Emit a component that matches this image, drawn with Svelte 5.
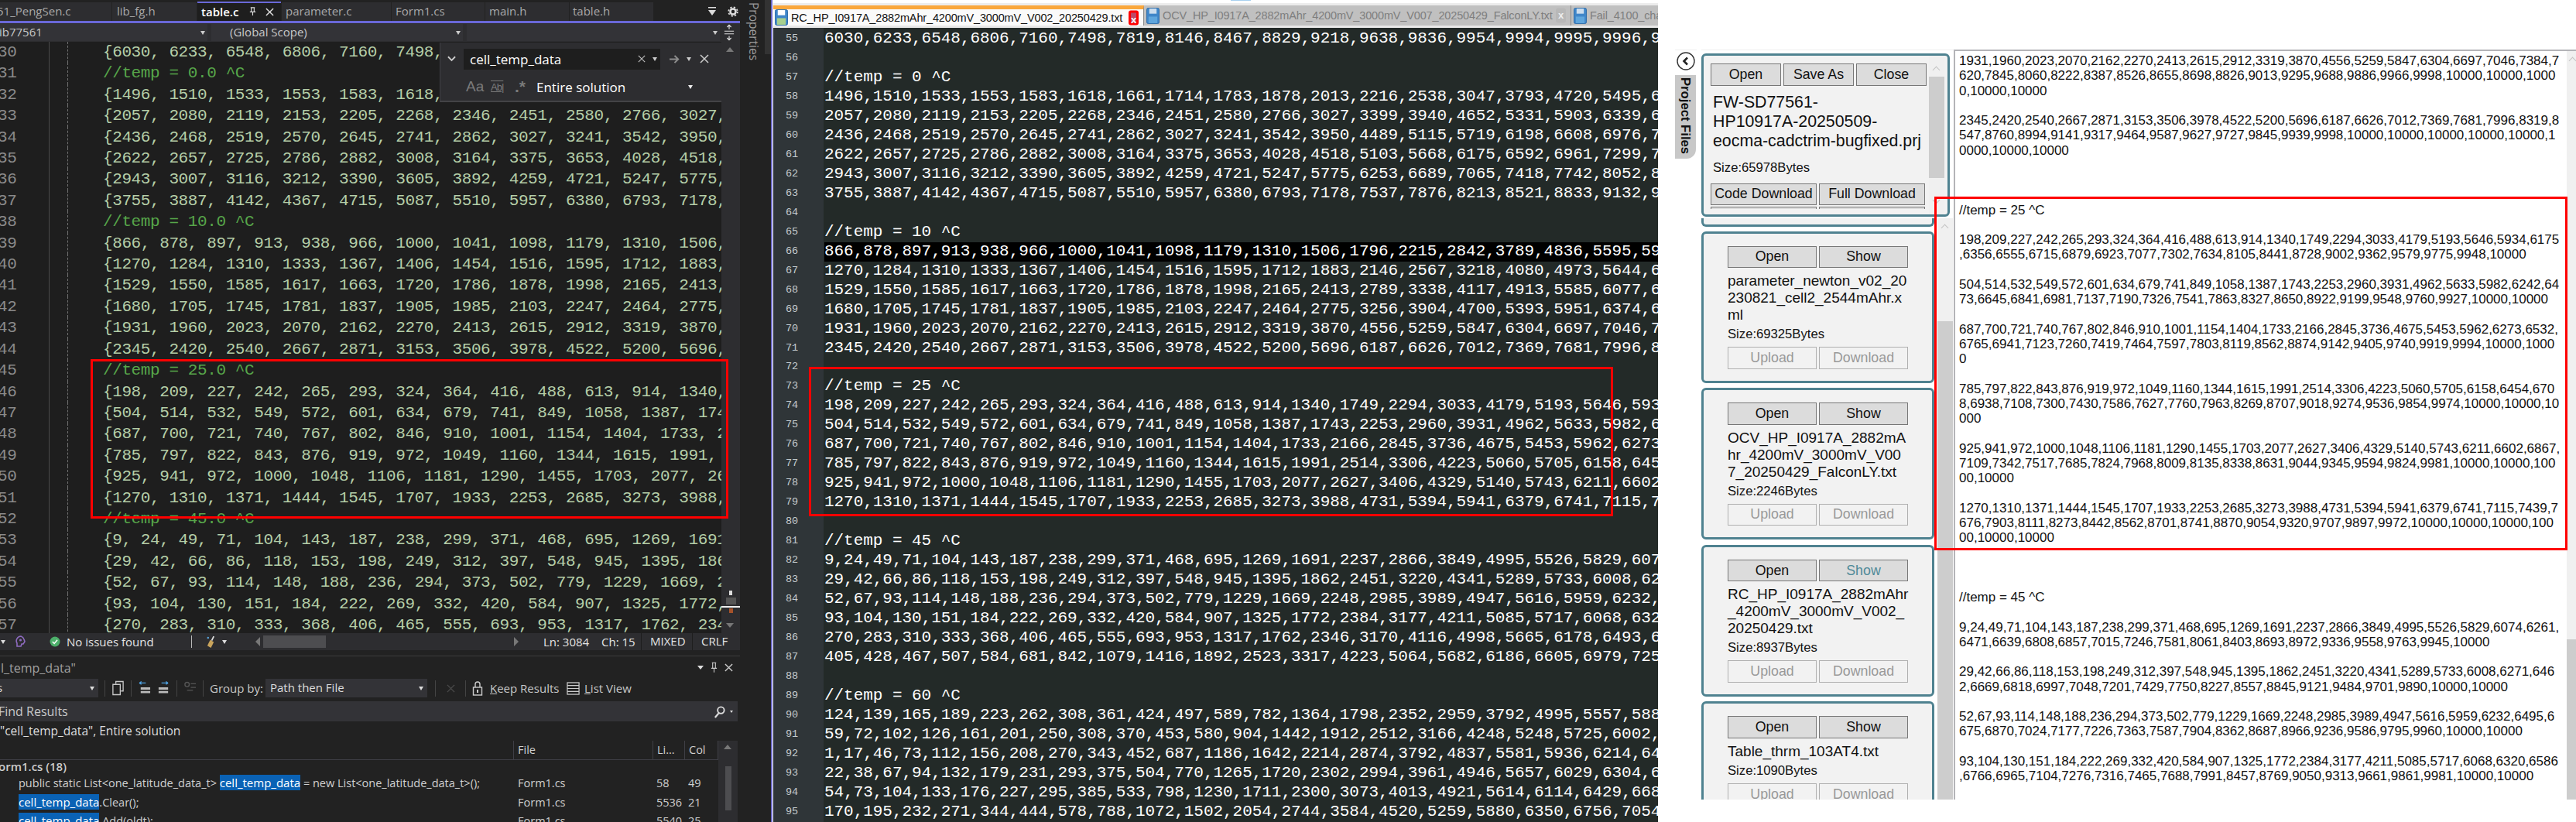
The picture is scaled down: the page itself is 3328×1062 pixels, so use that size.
<script>
  const vsTabs = [
    { label: '51_PengSen.c', w: 144, indent: -4 },
    { label: 'lib_fg.h', w: 109, indent: 6 },
    { label: 'table.c', w: 108, indent: 5, active: true },
    { label: 'parameter.c', w: 141, indent: 5 },
    { label: 'Form1.cs', w: 120, indent: 5 },
    { label: 'main.h', w: 108, indent: 5 },
    { label: 'table.h', w: 108, indent: 4 }
  ];

  const vsLines = [
    '{6030, 6233, 6548, 6806, 7160, 7498, 7819, 8146, 8467, 8829, 9218,',
    '//temp = 0.0 ^C',
    '{1496, 1510, 1533, 1553, 1583, 1618, 1661, 1714, 1783, 1878, 2013,',
    '{2057, 2080, 2119, 2153, 2205, 2268, 2346, 2451, 2580, 2766, 3027,',
    '{2436, 2468, 2519, 2570, 2645, 2741, 2862, 3027, 3241, 3542, 3950,',
    '{2622, 2657, 2725, 2786, 2882, 3008, 3164, 3375, 3653, 4028, 4518,',
    '{2943, 3007, 3116, 3212, 3390, 3605, 3892, 4259, 4721, 5247, 5775,',
    '{3755, 3887, 4142, 4367, 4715, 5087, 5510, 5957, 6380, 6793, 7178,',
    '//temp = 10.0 ^C',
    '{866, 878, 897, 913, 938, 966, 1000, 1041, 1098, 1179, 1310, 1506,',
    '{1270, 1284, 1310, 1333, 1367, 1406, 1454, 1516, 1595, 1712, 1883,',
    '{1529, 1550, 1585, 1617, 1663, 1720, 1786, 1878, 1998, 2165, 2413,',
    '{1680, 1705, 1745, 1781, 1837, 1905, 1985, 2103, 2247, 2464, 2775,',
    '{1931, 1960, 2023, 2070, 2162, 2270, 2413, 2615, 2912, 3319, 3870,',
    '{2345, 2420, 2540, 2667, 2871, 3153, 3506, 3978, 4522, 5200, 5696,',
    '//temp = 25.0 ^C',
    '{198, 209, 227, 242, 265, 293, 324, 364, 416, 488, 613, 914, 1340,',
    '{504, 514, 532, 549, 572, 601, 634, 679, 741, 849, 1058, 1387, 1743,',
    '{687, 700, 721, 740, 767, 802, 846, 910, 1001, 1154, 1404, 1733, 2166,',
    '{785, 797, 822, 843, 876, 919, 972, 1049, 1160, 1344, 1615, 1991, 2514,',
    '{925, 941, 972, 1000, 1048, 1106, 1181, 1290, 1455, 1703, 2077, 2627,',
    '{1270, 1310, 1371, 1444, 1545, 1707, 1933, 2253, 2685, 3273, 3988,',
    '//temp = 45.0 ^C',
    '{9, 24, 49, 71, 104, 143, 187, 238, 299, 371, 468, 695, 1269, 1691, 2237,',
    '{29, 42, 66, 86, 118, 153, 198, 249, 312, 397, 548, 945, 1395, 1862,',
    '{52, 67, 93, 114, 148, 188, 236, 294, 373, 502, 779, 1229, 1669, 2248,',
    '{93, 104, 130, 151, 184, 222, 269, 332, 420, 584, 907, 1325, 1772, 2384,',
    '{270, 283, 310, 333, 368, 406, 465, 555, 693, 953, 1317, 1762, 2346,'
  ];

  const nppLines = [
    '6030,6233,6548,6806,7160,7498,7819,8146,8467,8829,9218,9638,9836,9954,9994,9995,9996,9',
    '',
    '//temp = 0 ^C',
    '1496,1510,1533,1553,1583,1618,1661,1714,1783,1878,2013,2216,2538,3047,3793,4720,5495,6',
    '2057,2080,2119,2153,2205,2268,2346,2451,2580,2766,3027,3399,3940,4652,5331,5903,6339,6',
    '2436,2468,2519,2570,2645,2741,2862,3027,3241,3542,3950,4489,5115,5719,6198,6608,6976,7',
    '2622,2657,2725,2786,2882,3008,3164,3375,3653,4028,4518,5103,5668,6175,6592,6961,7299,7',
    '2943,3007,3116,3212,3390,3605,3892,4259,4721,5247,5775,6253,6689,7065,7418,7742,8052,8',
    '3755,3887,4142,4367,4715,5087,5510,5957,6380,6793,7178,7537,7876,8213,8521,8833,9132,9',
    '',
    '//temp = 10 ^C',
    '866,878,897,913,938,966,1000,1041,1098,1179,1310,1506,1796,2215,2842,3789,4836,5595,59',
    '1270,1284,1310,1333,1367,1406,1454,1516,1595,1712,1883,2146,2567,3218,4080,4973,5644,6',
    '1529,1550,1585,1617,1663,1720,1786,1878,1998,2165,2413,2789,3338,4117,4913,5585,6077,6',
    '1680,1705,1745,1781,1837,1905,1985,2103,2247,2464,2775,3256,3904,4700,5393,5951,6374,6',
    '1931,1960,2023,2070,2162,2270,2413,2615,2912,3319,3870,4556,5259,5847,6304,6697,7046,7',
    '2345,2420,2540,2667,2871,3153,3506,3978,4522,5200,5696,6187,6626,7012,7369,7681,7996,8',
    '',
    '//temp = 25 ^C',
    '198,209,227,242,265,293,324,364,416,488,613,914,1340,1749,2294,3033,4179,5193,5646,593',
    '504,514,532,549,572,601,634,679,741,849,1058,1387,1743,2253,2960,3931,4962,5633,5982,6',
    '687,700,721,740,767,802,846,910,1001,1154,1404,1733,2166,2845,3736,4675,5453,5962,6273',
    '785,797,822,843,876,919,972,1049,1160,1344,1615,1991,2514,3306,4223,5060,5705,6158,645',
    '925,941,972,1000,1048,1106,1181,1290,1455,1703,2077,2627,3406,4329,5140,5743,6211,6602',
    '1270,1310,1371,1444,1545,1707,1933,2253,2685,3273,3988,4731,5394,5941,6379,6741,7115,7',
    '',
    '//temp = 45 ^C',
    '9,24,49,71,104,143,187,238,299,371,468,695,1269,1691,2237,2866,3849,4995,5526,5829,607',
    '29,42,66,86,118,153,198,249,312,397,548,945,1395,1862,2451,3220,4341,5289,5733,6008,62',
    '52,67,93,114,148,188,236,294,373,502,779,1229,1669,2248,2985,3989,4947,5616,5959,6232,',
    '93,104,130,151,184,222,269,332,420,584,907,1325,1772,2384,3177,4211,5085,5717,6068,632',
    '270,283,310,333,368,406,465,555,693,953,1317,1762,2346,3170,4116,4998,5665,6178,6493,6',
    '405,428,467,507,584,681,842,1079,1416,1892,2523,3317,4223,5064,5682,6186,6605,6979,725',
    '',
    '//temp = 60 ^C',
    '124,139,165,189,223,262,308,361,424,497,589,782,1364,1798,2352,2959,3792,4995,5557,588',
    '59,72,102,126,161,201,250,308,370,453,580,904,1442,1912,2512,3166,4248,5248,5725,6002,',
    '1,17,46,73,112,156,208,270,343,452,687,1186,1642,2214,2874,3792,4837,5581,5936,6214,64',
    '22,38,67,94,132,179,231,293,375,504,770,1265,1720,2302,2994,3961,4946,5657,6029,6304,6',
    '54,73,104,133,176,227,295,385,533,798,1230,1711,2300,3073,4013,4921,5614,6114,6429,668',
    '170,195,232,271,344,444,578,788,1072,1502,2054,2744,3584,4520,5259,5880,6350,6756,7054'
  ];

  const files = [
    { name: 'parameter_newton_v02_20230821_cell2_2544mAhr.xml', size: 69325 },
    { name: 'OCV_HP_I0917A_2882mAhr_4200mV_3000mV_V007_20250429_FalconLY.txt', size: 2246 },
    { name: 'RC_HP_I0917A_2882mAhr_4200mV_3000mV_V002_20250429.txt', size: 8937, showing: true },
    { name: 'Table_thrm_103AT4.txt', size: 1090 }
  ];

  const preview = [
    '1931,1960,2023,2070,2162,2270,2413,2615,2912,3319,3870,4556,5259,5847,6304,6697,7046,7384,7',
    '620,7845,8060,8222,8387,8526,8655,8698,8826,9013,9295,9688,9886,9966,9998,10000,10000,1000',
    '0,10000,10000',
    '',
    '2345,2420,2540,2667,2871,3153,3506,3978,4522,5200,5696,6187,6626,7012,7369,7681,7996,8319,8',
    '547,8760,8994,9141,9317,9464,9587,9627,9727,9845,9939,9998,10000,10000,10000,10000,10000,1',
    '0000,10000,10000',
    '', '', '',
    '//temp = 25 ^C',
    '',
    '198,209,227,242,265,293,324,364,416,488,613,914,1340,1749,2294,3033,4179,5193,5646,5934,6175',
    ',6356,6555,6715,6879,6923,7077,7302,7634,8105,8441,8728,9002,9362,9579,9775,9948,10000',
    '',
    '504,514,532,549,572,601,634,679,741,849,1058,1387,1743,2253,2960,3931,4962,5633,5982,6242,64',
    '73,6645,6841,6981,7137,7190,7326,7541,7863,8327,8650,8922,9199,9548,9760,9927,10000,10000',
    '',
    '687,700,721,740,767,802,846,910,1001,1154,1404,1733,2166,2845,3736,4675,5453,5962,6273,6532,',
    '6765,6941,7123,7260,7419,7464,7597,7803,8119,8562,8874,9142,9405,9740,9919,9994,10000,1000',
    '0',
    '',
    '785,797,822,843,876,919,972,1049,1160,1344,1615,1991,2514,3306,4223,5060,5705,6158,6454,670',
    '8,6938,7108,7300,7430,7586,7627,7760,7963,8269,8707,9018,9274,9536,9854,9974,10000,10000,10',
    '000',
    '',
    '925,941,972,1000,1048,1106,1181,1290,1455,1703,2077,2627,3406,4329,5140,5743,6211,6602,6867,',
    '7109,7342,7517,7685,7824,7968,8009,8135,8338,8631,9044,9345,9594,9824,9981,10000,10000,100',
    '00,10000',
    '',
    '1270,1310,1371,1444,1545,1707,1933,2253,2685,3273,3988,4731,5394,5941,6379,6741,7115,7439,7',
    '676,7903,8111,8273,8442,8562,8701,8741,8870,9054,9320,9707,9897,9972,10000,10000,10000,100',
    '00,10000,10000',
    '', '', '',
    '//temp = 45 ^C',
    '',
    '9,24,49,71,104,143,187,238,299,371,468,695,1269,1691,2237,2866,3849,4995,5526,5829,6074,6261,',
    '6471,6639,6808,6857,7015,7246,7581,8061,8403,8693,8972,9336,9558,9763,9945,10000',
    '',
    '29,42,66,86,118,153,198,249,312,397,548,945,1395,1862,2451,3220,4341,5289,5733,6008,6271,646',
    '2,6669,6818,6997,7048,7201,7429,7750,8227,8557,8845,9121,9484,9701,9890,10000,10000',
    '',
    '52,67,93,114,148,188,236,294,373,502,779,1229,1669,2248,2985,3989,4947,5616,5959,6232,6495,6',
    '675,6870,7024,7177,7226,7363,7587,7904,8362,8687,8966,9236,9586,9795,9960,10000,10000',
    '',
    '93,104,130,151,184,222,269,332,420,584,907,1325,1772,2384,3177,4211,5085,5717,6068,6320,6586',
    ',6766,6965,7104,7276,7316,7465,7688,7991,8457,8769,9050,9313,9661,9861,9981,10000,10000'
  ];
</script>

<main class="screen">
  <!-- visual studio -->
  <section class="vs">
    <div class="vs-main">
      <div class="vs-tabs">
        {#each vsTabs as t}
          <div class="vs-tab" class:active={t.active} style="width:{t.w}px;text-indent:{t.indent}px">
            {t.label}
            {#if t.active}
              <svg class="pin" viewBox="0 0 12 14" width="11" height="13"><path d="M3 2h6M4 2v6h4V2M2 8h8M6 8v5" fill="none" stroke="#ddd" stroke-width="1.2"/></svg>
              <svg class="tabx" viewBox="0 0 12 12" width="11" height="11"><path d="M1 1l10 10M11 1L1 11" stroke="#ddd" stroke-width="1.6"/></svg>
            {/if}
          </div>
        {/each}
        <div class="tab-tools">
          <svg viewBox="0 0 10 14" width="10" height="14"><path d="M0 1h10v1.5H0zM0 5h10L5 12z" fill="#ddd"/></svg>
          <svg viewBox="0 0 16 16" width="14" height="14"><circle cx="8" cy="8" r="4" fill="none" stroke="#ddd" stroke-width="3"/><circle cx="8" cy="8" r="6.6" fill="none" stroke="#ddd" stroke-width="2" stroke-dasharray="2.6 2.6"/></svg>
        </div>
      </div>
      <div class="vs-sub">
        <div class="combo c1">ib77561<i class="down"></i></div>
        <div class="combo c2">(Global Scope)<i class="down"></i></div>
        <div class="combo c3"><i class="down"></i></div>
        <svg class="split" viewBox="0 0 16 24" width="14" height="22"><path d="M1 10h14M1 14h14M8 1v6M8 17v6M5 4l3-3 3 3M5 20l3 3 3-3" fill="none" stroke="#ddd" stroke-width="1.4"/></svg>
      </div>

      <div class="vs-editor">
        <div class="vs-code">
          {#each vsLines as l, i}
            <div class="vs-line">
              <span class="vs-num">{i + 30}</span>
              <span class="vs-guide"></span>
              <span class="vs-text" class:comment={l.startsWith('//')}>{l}</span>
            </div>
          {/each}
        </div>
        <div class="vs-scroll">
          <i class="arrow-up"></i>
          <div class="marks">
            <b class="m1"></b><b class="m2"></b><b class="m3"></b><b class="m4"></b>
          </div>
          <i class="arrow-down"></i>
        </div>

        <div class="find">
          <div class="find-row">
            <svg class="chev" viewBox="0 0 12 8" width="11" height="8"><path d="M1 1l5 5 5-5" fill="none" stroke="#ccc" stroke-width="2"/></svg>
            <div class="find-input">
              <span>cell_temp_data</span>
              <svg viewBox="0 0 12 12" width="10" height="10"><path d="M1 1l10 10M11 1L1 11" stroke="#bbb" stroke-width="1.4"/></svg>
              <i class="tri"></i>
            </div>
            <svg class="next" viewBox="0 0 16 14" width="15" height="13"><path d="M1 7h12M8 2l5 5-5 5" fill="none" stroke="#8c8c8c" stroke-width="2.2"/></svg>
            <i class="tri"></i>
            <svg class="close" viewBox="0 0 12 12" width="12" height="12"><path d="M1 1l10 10M11 1L1 11" stroke="#ccc" stroke-width="1.5"/></svg>
          </div>
          <div class="find-row second">
            <span class="opt aa">Aa</span>
            <span class="opt ab">Ab|</span>
            <span class="opt rx">.*</span>
            <span class="scope">Entire solution</span>
            <i class="tri"></i>
          </div>
        </div>
      </div>

      <div class="vs-status">
        <i class="tri st-first"></i>
        <svg class="brain" viewBox="0 0 14 16" width="14" height="16"><path d="M7 1a6 6 0 0 0-5 9v4h5l1-3h2l2-3-1-3a6 6 0 0 0-4-4z" fill="none" stroke="#8e6bc0" stroke-width="1.6"/><circle cx="6.5" cy="6" r="1.6" fill="#8e6bc0"/></svg>
        <svg class="ok" viewBox="0 0 14 14" width="14" height="14"><circle cx="7" cy="7" r="6.5" fill="#4caf6a"/><path d="M3.8 7l2.3 2.4 4-4.6" fill="none" stroke="#fff" stroke-width="1.5"/></svg>
        <span class="issues">No issues found</span>
        <i class="st-sep"></i>
        <svg class="broom" viewBox="0 0 14 18" width="13" height="17"><path d="M11 1L8 7" stroke="#ddd" stroke-width="2"/><path d="M6 6l5 3-4 8-5-3z" fill="#c9a45c"/><circle cx="3" cy="3" r="1.3" fill="#5aa7e0"/></svg>
        <i class="tri st-broom"></i>
        <i class="st-left"></i>
        <div class="st-track"><div class="st-thumb"></div></div>
        <i class="st-right"></i>
        <span class="ln">Ln: 3084</span>
        <span class="ch">Ch: 15</span>
        <span class="st-box mixed">MIXED</span>
        <span class="st-box crlf">CRLF</span>
      </div>

      <div class="vs-results">
        <div class="r-title">
          <span>l_temp_data"</span>
          <div class="r-title-tools">
            <i class="tri"></i>
            <svg viewBox="0 0 10 16" width="9" height="15"><path d="M3 1v8h4V1M2 1h6M1 9h8M5 9v6" fill="none" stroke="#ccc" stroke-width="1.2"/></svg>
            <svg viewBox="0 0 12 12" width="11" height="11"><path d="M1 1l10 10M11 1L1 11" stroke="#ccc" stroke-width="1.5"/></svg>
          </div>
        </div>
        <div class="r-tools">
          <div class="r-combo first">s<i class="tri"></i></div>
          <i class="r-sep"></i>
          <svg class="ic" viewBox="0 0 18 20" width="17" height="20"><path d="M6 4V1h10v13h-3M2 5h10v14H2z" fill="none" stroke="#c8c8c8" stroke-width="1.4"/></svg>
          <i class="r-sep"></i>
          <svg class="ic" viewBox="0 0 18 20" width="17" height="20"><path d="M2 3h9M2 3l3-2M2 3l3 2" fill="none" stroke="#4ea1e0" stroke-width="1.3"/><path d="M4 9h13v3H4zM4 14h13v3H4z" fill="#bbb"/></svg>
          <svg class="ic" viewBox="0 0 18 20" width="17" height="20"><path d="M6 3h9M15 3l-3-2M15 3l-3 2" fill="none" stroke="#4ea1e0" stroke-width="1.3"/><path d="M2 9h13v3H2zM2 14h13v3H2z" fill="#bbb"/></svg>
          <i class="r-sep"></i>
          <svg class="ic" viewBox="0 0 18 20" width="17" height="20"><circle cx="5" cy="5" r="3" fill="none" stroke="#555" stroke-width="1.5"/><path d="M10 4h7M10 9h7M5 13h8" stroke="#555" stroke-width="1.4"/></svg>
          <i class="r-sep"></i>
          <span class="r-label">Group by:</span>
          <div class="r-combo group">Path then File<i class="tri"></i></div>
          <i class="r-sep"></i>
          <svg class="dimx" viewBox="0 0 12 12" width="11" height="11"><path d="M1 1l10 10M11 1L1 11" stroke="#4c4c4c" stroke-width="1.4"/></svg>
          <i class="r-sep"></i>
          <svg class="ic lock" viewBox="0 0 14 20" width="14" height="20"><path d="M4 9V5a3 3 0 0 1 6 0v4" fill="none" stroke="#ccc" stroke-width="1.4"/><rect x="1.5" y="9" width="11" height="10" fill="none" stroke="#ccc" stroke-width="1.4"/><rect x="6" y="12" width="2" height="4" fill="#ccc"/></svg>
          <span class="r-link keep"><u>K</u>eep Results</span>
          <svg class="ic list-ic" viewBox="0 0 18 18" width="17" height="17"><rect x="1" y="1" width="16" height="16" fill="none" stroke="#ccc" stroke-width="1.3"/><path d="M1 5h16M1 9h16M1 13h16" stroke="#ccc" stroke-width="1.3"/></svg>
          <span class="r-link"><u>L</u>ist View</span>
        </div>
        <div class="r-search">
          <span>Find Results</span>
          <svg viewBox="0 0 18 18" width="17" height="17"><circle cx="11" cy="7" r="4.5" fill="none" stroke="#ddd" stroke-width="2"/><path d="M8 11l-5 6" stroke="#ddd" stroke-width="2.4"/></svg>
          <i class="tri small"></i>
        </div>
        <div class="r-summary">"cell_temp_data", Entire solution</div>
        <div class="r-body">
          <div class="r-table">
            <div class="r-row head">
              <span class="col code"></span><span class="col file">File</span><span class="col li">Li...</span><span class="col cc">Col</span>
            </div>
            <div class="r-group">orm1.cs (18)</div>
            <div class="r-row">
              <span class="col code">public static List&lt;one_latitude_data_t&gt; <mark>cell_temp_data</mark> = new List&lt;one_latitude_data_t&gt;();</span>
              <span class="col file">Form1.cs</span><span class="col li">58</span><span class="col cc">49</span>
            </div>
            <div class="r-row">
              <span class="col code"><mark>cell_temp_data</mark>.Clear();</span>
              <span class="col file">Form1.cs</span><span class="col li">5536</span><span class="col cc">21</span>
            </div>
            <div class="r-row">
              <span class="col code"><mark>cell_temp_data</mark>.Add(oldt);</span>
              <span class="col file">Form1.cs</span><span class="col li">5540</span><span class="col cc">25</span>
            </div>
          </div>
          <div class="r-scroll"><i class="arrow-up"></i><div class="r-thumb"></div></div>
        </div>
      </div>
    </div>
    <div class="vs-side">
      <span class="props">Properties</span>
      <div class="side-bar"></div>
    </div>
  </section>

  <!-- notepad++ -->
  <section class="npp">
    <div class="npp-tabs">
      <div class="npp-tab on">
        <svg viewBox="0 0 18 22" width="17" height="21"><rect x=".5" y=".5" width="17" height="21" rx="2" fill="#3f86c9" stroke="#2a6aa8"/><rect x="4" y="1" width="10" height="7" fill="#fff"/><rect x="3" y="12" width="12" height="9" fill="#a8d08d"/></svg>
        <span>RC_HP_I0917A_2882mAhr_4200mV_3000mV_V002_20250429.txt</span>
        <i class="npp-x red">x</i>
      </div>
      <div class="npp-tab two">
        <svg viewBox="0 0 18 22" width="17" height="21"><rect x=".5" y=".5" width="17" height="21" rx="2" fill="#3f86c9" stroke="#2a6aa8"/><rect x="4" y="1" width="10" height="7" fill="#cde"/><rect x="3" y="12" width="12" height="9" fill="#5fa6dd"/></svg>
        <span>OCV_HP_I0917A_2882mAhr_4200mV_3000mV_V007_20250429_FalconLY.txt</span>
        <i class="npp-x">x</i>
      </div>
      <div class="npp-tab three">
        <svg viewBox="0 0 18 22" width="17" height="21"><rect x=".5" y=".5" width="17" height="21" rx="2" fill="#3f86c9" stroke="#2a6aa8"/><rect x="4" y="1" width="10" height="7" fill="#cde"/><rect x="3" y="12" width="12" height="9" fill="#5fa6dd"/></svg>
        <span>Fail_4100_cha</span>
      </div>
    </div>
    <div class="npp-editor">
      {#each nppLines as l, i}
        <div class="npp-line" class:sel={i === 11}>
          <span class="npp-num">{i + 55}</span>
          <span class="npp-text">{l}</span>
        </div>
      {/each}
    </div>
  </section>

  <!-- project files pane -->
  <section class="pane">
    <div class="rail">
      <svg class="back" viewBox="0 0 24 24" width="24" height="24"><circle cx="12" cy="12" r="11" fill="#fff" stroke="#333" stroke-width="1.4"/><path d="M14 7.5L9.5 12l4.5 4.5" fill="none" stroke="#222" stroke-width="2.6"/></svg>
      <div class="rail-tab">Project Files</div>
    </div>

    <div class="side">
      <div class="top-card">
        <div class="top-body">
          <div class="btns three">
            <button>Open</button><button>Save As</button><button>Close</button>
          </div>
          <div class="top-name">FW-SD77561-<br>HP10917A-20250509-<br>eocma-cadctrim-bugfixed.prj</div>
          <div class="top-size">Size:65978Bytes</div>
          <div class="btns two">
            <button>Code Download</button><button>Full Download</button>
          </div>
          <div class="btns two peek">
            <button></button><button></button>
          </div>
        </div>
        <div class="bar top-bar">
          <i class="chev-up"></i>
          <div class="thumb"></div>
          <i class="chev-down"></i>
        </div>
      </div>

      <div class="lower">
        <div class="list">
          <div class="stub"></div>
          {#each files as f}
            <div class="card">
              <div class="btns">
                <button>Open</button><button class:showing={f.showing}>Show</button>
              </div>
              <div class="name">{f.name}</div>
              <div class="size">Size:{f.size}Bytes</div>
              <div class="btns">
                <button disabled>Upload</button><button disabled>Download</button>
              </div>
            </div>
          {/each}
        </div>
        <div class="bar list-bar">
          <i class="chev-up"></i>
          <div class="thumb"></div>
        </div>
      </div>
    </div>

    <div class="preview">
      <div class="preview-text">
        {#each preview as p}
          <div class="p-line">{p}</div>
        {/each}
      </div>
      <div class="preview-bar"><i class="chev-up"></i><div class="thumb"></div></div>
    </div>
  </section>

  <!-- hand drawn red annotation boxes -->
  <div class="red r1"></div>
  <div class="red r2"></div>
  <div class="red r3"></div>
  <div class="top-mark"></div>
</main>

<style>
  :global(body) {
    margin: 0;
    background: #fff;
  }

  .screen {
    position: relative;
    width: 3328px;
    height: 1062px;
    display: flex;
    overflow: hidden;
    background: #fff;
    font-family: "Liberation Sans", Arial, sans-serif;
  }

  i { display: block; font-style: normal; }

  .tri {
    width: 0;
    height: 0;
    border-left: 4px solid transparent;
    border-right: 4px solid transparent;
    border-top: 5px solid #ddd;
    flex: none;
  }

  /* ---- visual studio ---- */
  .vs {
    width: 996px;
    height: 1062px;
    flex: none;
    display: flex;
    background: #222;
    border-right: 2px solid #6a68c8;
    color: #c8c8c8;
    font-family: "Open Sans", sans-serif;
    font-size: 15px;
  }
  .vs-main {
    width: 956px;
    flex: none;
    display: flex;
    flex-direction: column;
  }
  .vs-tabs {
    height: 24px;
    padding-top: 3px;
    display: flex;
    gap: 1px;
    border-bottom: 3px solid #6a68d8;
    box-sizing: content-box;
    overflow: hidden;
  }
  .vs-tab {
    flex: none;
    box-sizing: border-box;
    height: 24px;
    line-height: 23px;
    background: #2d2d30;
    color: #a8a8a8;
    font-size: 15px;
    white-space: nowrap;
    position: relative;
  }
  .vs-tab.active {
    background: #1e1e1e;
    color: #fff;
    font-weight: 600;
    border-top: 2px solid #6a68d8;
    margin-top: -1px;
    height: 25px;
  }
  .pin { position: absolute; left: 66px; top: 4px; }
  .tabx { position: absolute; left: 88px; top: 6px; }
  .tab-tools {
    margin-left: auto;
    display: flex;
    align-items: center;
    gap: 15px;
    padding-right: 2px;
  }
  .vs-sub {
    height: 24px;
    display: flex;
    gap: 5px;
    background: #2d2d30;
    padding: 1px 0;
    box-sizing: border-box;
    align-items: stretch;
  }
  .combo {
    position: relative;
    background: #333337;
    color: #c8c8c8;
    line-height: 21px;
    font-size: 15px;
    box-sizing: border-box;
  }
  .combo .down {
    position: absolute;
    right: 3px;
    top: 9px;
    border-left: 3px solid transparent;
    border-right: 3px solid transparent;
    border-top: 5px solid #ccc;
  }
  .c1 { width: 268px; text-indent: -1px; }
  .c2 { width: 325px; padding-left: 24px; }
  .c3 { width: 327px; }
  .split { margin-left: 0; flex: none; align-self: center; }

  .vs-editor {
    position: relative;
    height: 764px;
    display: flex;
    background: #1e1e1e;
    overflow: hidden;
  }
  .vs-code {
    width: 932px;
    flex: none;
    overflow: hidden;
    font-family: "Liberation Mono", monospace;
    font-size: 21px;
    letter-spacing: -0.4px;
    color: #b5cea8;
  }
  .vs-line {
    height: 27.42px;
    line-height: 27.42px;
    display: flex;
    white-space: nowrap;
  }
  .vs-num {
    width: 64px;
    flex: none;
    box-sizing: border-box;
    border-right: 1px solid #4a4a4a;
    color: #8a8a8a;
    text-indent: -3px;
  }
  .vs-guide {
    width: 24px;
    flex: none;
    box-sizing: border-box;
    border-right: 1px dashed #707070;
  }
  .vs-text { padding-left: 45px; }
  .comment { color: #57a64a; }
  .vs-scroll {
    flex: 1;
    background: #2d2d30;
    position: relative;
  }
  .arrow-up {
    position: absolute;
    top: 7px;
    left: 6px;
    border-left: 5px solid transparent;
    border-right: 5px solid transparent;
    border-bottom: 6px solid #777;
  }
  .arrow-down {
    position: absolute;
    bottom: 7px;
    left: 6px;
    border-left: 5px solid transparent;
    border-right: 5px solid transparent;
    border-top: 6px solid #777;
  }
  .marks {
    position: absolute;
    top: 709px;
    left: 5px;
    width: 14px;
    display: flex;
    flex-direction: column;
    align-items: center;
  }
  .marks b { display: block; }
  .m1 { width: 4px; height: 6px; background: #ddd; margin-bottom: 3px; }
  .m2 { width: 13px; height: 9px; background: #555; margin-bottom: 2px; flex: none; }
  .m3 { width: 24px; height: 1.5px; background: #eee; margin-bottom: 1px; flex: none; }
  .m4 { width: 5px; height: 6px; background: #a5522a; }

  .find {
    position: absolute;
    left: 568px;
    top: 1px;
    width: 364px;
    height: 77px;
    box-sizing: border-box;
    background: #2d2d30;
    border-left: 1px solid #3f3f46;
    border-bottom: 2px solid #434346;
    color: #fff;
    font-size: 16px;
  }
  .find-row {
    display: flex;
    align-items: center;
    height: 37px;
    padding-top: 5px;
    box-sizing: border-box;
  }
  .chev { margin: 0 10px 0 9px; flex: none; }
  .find-input {
    width: 254px;
    height: 27px;
    box-sizing: border-box;
    flex: none;
    background: #1e1e1e;
    display: flex;
    align-items: center;
    padding-left: 8px;
    font-size: 17px;
    color: #fff;
  }
  .find-input span { flex: 1; }
  .find-input svg { margin-right: 9px; }
  .find-input .tri { margin-right: 4px; border-left-width: 3px; border-right-width: 3px; border-top-color: #ccc; }
  .next { margin: 0 8px 0 11px; flex: none; }
  .find-row > .tri { border-left-width: 3.5px; border-right-width: 3.5px; border-top-color: #ccc; }
  .close { margin-left: 11px; flex: none; }
  .second { height: 36px; padding: 4px 0 0 33px; }
  .opt { color: #7a7a7a; flex: none; font-family: "Liberation Sans", sans-serif; }
  .aa { font-size: 19px; width: 32px; }
  .ab { font-size: 13px; width: 31px; text-decoration: underline overline; letter-spacing: -1px; }
  .rx { font-size: 21px; font-weight: 700; width: 28px; line-height: 20px; }
  .scope { font-size: 17px; width: 196px; flex: none; }
  .second .tri { border-top-color: #eee; border-left-width: 3.5px; border-right-width: 3.5px; }

  .vs-status {
    height: 22px;
    display: flex;
    align-items: center;
    background: #2d2d30;
    font-size: 15px;
    color: #e4e4e4;
    position: relative;
  }
  .st-first { margin: 0 8px 0 1px; border-left-width: 3px; border-right-width: 3px; }
  .brain { margin: 0 30px 0 5px; flex: none; }
  .ok { flex: none; }
  .issues { margin-left: 8px; width: 161px; flex: none; white-space: nowrap; }
  .st-sep { width: 1px; height: 16px; background: #bbb; margin-right: 18px; flex: none; }
  .broom { flex: none; }
  .st-broom { margin: 0 37px 0 8px; border-left-width: 3.5px; border-right-width: 3.5px; }
  .st-left, .st-right {
    width: 0;
    height: 0;
    border-top: 6px solid transparent;
    border-bottom: 6px solid transparent;
    flex: none;
  }
  .st-left { border-right: 6px solid #777; margin-right: 4px; }
  .st-right { border-left: 6px solid #777; margin-right: 32px; }
  .st-track { width: 324px; flex: none; }
  .st-thumb { width: 81px; height: 16px; background: #4d4d50; }
  .ln { width: 75px; flex: none; }
  .ch { width: 51px; flex: none; }
  .st-box {
    height: 22px;
    line-height: 20px;
    border-left: 1px solid #1e1e1e;
    box-sizing: border-box;
    flex: none;
  }
  .mixed { width: 66px; padding-left: 11px; }
  .crlf { width: 54px; padding-left: 11px; }

  .vs-results {
    margin-top: 7px;
    height: 215px;
    border-top: 1px solid #3c3c3c;
    background: #222;
    box-sizing: border-box;
    color: #c8c8c8;
    font-size: 15px;
    overflow: hidden;
  }
  .r-title {
    height: 29px;
    display: flex;
    align-items: center;
    justify-content: space-between;
    color: #a0a0a0;
    font-size: 16px;
    text-indent: 1px;
  }
  .r-title-tools {
    display: flex;
    align-items: center;
    gap: 9px;
    padding-right: 9px;
  }
  .r-tools {
    height: 24px;
    display: flex;
    align-items: center;
    font-size: 15px;
  }
  .r-combo {
    height: 24px;
    line-height: 23px;
    background: #333337;
    color: #ddd;
    position: relative;
    box-sizing: border-box;
    flex: none;
  }
  .r-combo .tri { position: absolute; right: 5px; top: 10px; border-left-width: 3px; border-right-width: 3px; }
  .first { width: 127px; text-indent: -4px; margin-right: 8px; }
  .group { width: 209px; padding-left: 6px; }
  .r-sep { width: 1px; height: 21px; background: #444; margin: 0 8px 0 0; flex: none; }
  .ic { flex: none; margin-right: 8px; }
  .r-label { margin-right: 6px; white-space: nowrap; width: 66px; flex: none; }
  .group + .r-sep { margin-left: 10px; }
  .dimx { margin: 0 13px 0 6px; flex: none; }
  .r-link { white-space: nowrap; flex: none; }
  .lock { margin-right: 9px; }
  .keep { width: 89px; margin-right: 10px; }
  .list-ic { margin-right: 6px; }
  .r-search {
    margin-top: 5px;
    height: 26px;
    width: 953px;
    background: #333337;
    display: flex;
    align-items: center;
    font-size: 16px;
    color: #c8c8c8;
    text-indent: -2px;
  }
  .r-search span { flex: 1; }
  .r-search svg { margin-right: 5px; }
  .r-search .small { margin-right: 6px; border-left-width: 2.5px; border-right-width: 2.5px; border-top-width: 3px; }
  .r-summary {
    height: 25px;
    line-height: 25px;
    color: #ddd;
    font-size: 15.5px;
    white-space: nowrap;
  }
  .r-body {
    display: flex;
    position: relative;
  }
  .r-table {
    width: 928px;
    flex: none;
  }
  .r-row {
    display: flex;
    height: 24.5px;
    line-height: 24.5px;
    font-size: 14.5px;
    white-space: nowrap;
    color: #d0d0d0;
  }
  .head {
    height: 24px;
    line-height: 24px;
    border-bottom: 1px solid #3f3f46;
    box-sizing: content-box;
  }
  .col { display: block; overflow: hidden; box-sizing: border-box; flex: none; padding-left: 5px; }
  .col.code { width: 663px; padding-left: 24px; }
  .col.file { width: 180px; border-left: 1px solid transparent; }
  .col.li { width: 41px; }
  .col.cc { width: 44px; }
  .head .col { border-left: 1px solid #3f3f46; height: 24px; }
  .head .col.code { border-left: 0; }
  .head .col.cc { border-right: 1px solid #3f3f46; }
  mark {
    background: #0a62b5;
    color: #fff;
    display: inline-block;
    line-height: 20px;
    font-size: 15px;
  }
  .r-group {
    height: 18px;
    line-height: 16px;
    font-weight: 600;
    color: #ccc;
    font-size: 15px;
    text-indent: -2px;
  }
  .r-scroll {
    position: relative;
    width: 25px;
    flex: none;
    height: 110px;
    background: #2d2d30;
  }
  .r-scroll .arrow-up { top: 5px; left: 7px; }
  .r-thumb {
    position: absolute;
    left: 9px;
    top: 33px;
    width: 8px;
    height: 57px;
    background: #4d4d50;
  }

  .vs-side {
    flex: 1;
    position: relative;
    display: flex;
    justify-content: space-between;
    padding-left: 10px;
  }
  .props {
    writing-mode: vertical-rl;
    color: #9a9a9a;
    font-size: 15.5px;
    padding-top: 3px;
    line-height: 16px;
  }
  .side-bar {
    width: 8px;
    height: 70px;
    background: #333;
  }

  /* ---- notepad++ ---- */
  .npp {
    width: 1143px;
    margin-left: 1px;
    flex: none;
    display: flex;
    flex-direction: column;
  }
  .npp-tabs {
    height: 36px;
    box-sizing: border-box;
    padding-top: 7px;
    display: flex;
    background: linear-gradient(#fff 0 4px, #ececec 4px);
    border-bottom: 3px solid #e8e8e8;
    overflow: hidden;
  }
  .npp-tab {
    display: flex;
    align-items: center;
    height: 26px;
    flex: none;
    box-sizing: border-box;
    background: #c0c0c0;
    color: #7e7e7e;
    font-size: 14.5px;
    letter-spacing: -0.15px;
    font-family: "Liberation Sans", sans-serif;
    white-space: nowrap;
    border-right: 1px solid #8a8a8a;
    padding-left: 3px;
    position: relative;
  }
  .npp-tab span { margin-left: 4px; }
  .npp-tab.on {
    width: 479px;
    background: #fafafa;
    color: #111;
    border-top: 5px solid #faa73c;
    padding-left: 2px;
  }
  .npp-tab.on svg { margin-top: -1px; }
  .npp-tab.two { width: 552px; }
  .npp-tab.three { flex: 1; }
  .npp-x {
    position: absolute;
    right: 6px;
    top: 50%;
    transform: translateY(-50%);
    width: 13px;
    height: 19px;
    line-height: 17px;
    text-align: center;
    border-radius: 3px;
    background: #b8b8b8;
    color: #eee;
    font-weight: 700;
    font-size: 13px;
  }
  .npp-x.red { background: #bd4a67; color: #fff; }
  .npp-editor {
    flex: 1;
    padding-top: 2px;
    overflow: hidden;
    background: linear-gradient(90deg, #2f3538 65px, #232a28 65px);
  }
  .npp-line {
    display: flex;
    height: 24.98px;
    line-height: 24.98px;
    white-space: nowrap;
    overflow: hidden;
  }
  .npp-num {
    width: 66px;
    flex: none;
    box-sizing: border-box;
    padding-left: 16px;
    color: #c4ccd0;
    font-family: "Liberation Mono", monospace;
    font-size: 13.5px;
  }
  .npp-text {
    flex: 1;
    color: #fff;
    font-family: "Liberation Mono", monospace;
    font-size: 21px;
    letter-spacing: -0.04px;
  }
  .sel .npp-text { background: #000; }
  .top-mark {
    position: absolute;
    left: 1590px;
    top: 0;
    width: 26px;
    height: 1px;
    background: #a8d0f0;
  }

  /* ---- project files pane ---- */
  .pane {
    flex: 1;
    height: 969px;
    margin-top: 64px;
    padding-left: 22px;
    display: flex;
    overflow: hidden;
    color: #111;
  }
  .rail {
    width: 28px;
    flex: none;
    border-top: 1px solid #eee;
    box-sizing: border-box;
    margin-right: 6px;
    padding-top: 2px;
  }
  .back { display: block; margin-left: 2px; }
  .rail-tab {
    margin-top: 6px;
    width: 27px;
    height: 108px;
    box-sizing: border-box;
    background: #c8c8c8;
    border-bottom-right-radius: 12px;
    writing-mode: vertical-rl;
    font-size: 16.67px;
    font-weight: 700;
    line-height: 27px;
    padding-top: 3px;
    white-space: nowrap;
  }
  .side {
    width: 326px;
    flex: none;
    border-top: 1px solid #eee;
    box-sizing: border-box;
  }
  button {
    font-family: "Liberation Sans", sans-serif;
    font-size: 17.8px;
    height: 28.5px;
    padding: 0;
    background: #dcdcdc;
    border: 1.5px solid #777;
    color: #111;
    flex: none;
    white-space: nowrap;
  }
  button:disabled {
    background: #f2f2f2;
    border-color: #b0b0b0;
    color: #999;
  }
  button.showing { color: #4f8a99; }
  .btns {
    display: flex;
    gap: 3px;
  }
  .btns button { width: 115px; }
  .btns.three button { width: 91px; }
  .btns.two button { width: 137px; }
  .btns.peek { margin-top: 2px; height: 3px; overflow: hidden; }

  .top-card {
    margin-top: 4px;
    width: 321px;
    height: 211px;
    box-sizing: border-box;
    border: 3px solid #4f8290;
    border-radius: 6px;
    background: #f2f2f2;
    display: flex;
    overflow: hidden;
  }
  .top-body {
    width: 288px;
    flex: none;
    padding: 10px 0 0 9px;
    box-sizing: border-box;
  }
  .top-name {
    margin: 9px 0 0 3px;
    font-size: 21.33px;
    line-height: 25.4px;
    white-space: nowrap;
  }
  .top-size {
    margin: 10px 0 0 3px;
    font-size: 16.67px;
    line-height: 22px;
    height: 31px;
  }
  .bar {
    position: relative;
    background: #f0f0f0;
    flex: none;
    width: 20px;
  }
  .thumb {
    position: absolute;
    left: 0;
    right: 0;
    background: #cdcdcd;
  }
  .chev-up, .chev-down {
    position: absolute;
    left: 6px;
    width: 6px;
    height: 6px;
    border-left: 1.5px solid #c4c4c4;
    border-top: 1.5px solid #c4c4c4;
    transform: rotate(45deg);
  }
  .chev-down { transform: rotate(225deg); }
  .top-bar { margin-left: 3px; }
  .top-bar .chev-up { top: 15px; }
  .top-bar .thumb { top: 27px; height: 131px; }
  .top-bar .chev-down { top: 183px; }

  .lower {
    margin-top: 2px;
    display: flex;
    height: 751px;
    align-items: stretch;
  }
  .list {
    width: 301px;
    flex: none;
    display: flex;
    flex-direction: column;
    gap: 6.6px;
    overflow: hidden;
  }
  .stub {
    height: 11px;
    flex: none;
    box-sizing: border-box;
    border: 3px solid #4f8290;
    border-top: 0;
    border-radius: 0 0 6px 6px;
    background: #f2f2f2;
    margin-bottom: -1px;
  }
  .card {
    flex: none;
    height: 196px;
    box-sizing: border-box;
    border: 3px solid #4f8290;
    border-radius: 6px;
    background: #f2f2f2;
    padding: 16px 0 0 31px;
  }
  .name {
    width: 233.5px;
    margin-top: 6px;
    font-size: 19px;
    line-height: 22px;
    word-break: break-all;
  }
  .size {
    margin-top: 4px;
    font-size: 16.67px;
    line-height: 20px;
    margin-bottom: 6px;
  }
  .list-bar { margin-left: 4px; }
  .list-bar .chev-up { top: 9px; }
  .list-bar .thumb { top: 133px; bottom: 0; }

  .preview {
    flex: 1;
    display: flex;
    border-left: 2px solid #b4b4b8;
    border-top: 2px solid #b4b4b8;
    box-sizing: border-box;
    height: 969px;
    min-width: 0;
  }
  .preview-text {
    flex: 1;
    min-width: 0;
    padding: 3px 0 0 5px;
    font-size: 17px;
    line-height: 19.26px;
    color: #111;
    overflow: hidden;
  }
  .p-line {
    height: 19.26px;
    white-space: nowrap;
  }
  .preview-bar {
    width: 12px;
    flex: none;
    background: #f0f0f0;
    position: relative;
    overflow: hidden;
  }
  .preview-bar .chev-up { top: 9px; left: 4px; }
  .preview-bar .thumb { top: 760px; bottom: 0; }

  .red {
    position: absolute;
    box-sizing: border-box;
    border: 3px solid #f00;
    pointer-events: none;
  }
  .r1 { left: 117px; top: 464px; width: 824px; height: 206px; }
  .r2 { left: 1045px; top: 474px; width: 1039px; height: 193px; }
  .r3 { left: 2499px; top: 254px; width: 818px; height: 457px; }
</style>
